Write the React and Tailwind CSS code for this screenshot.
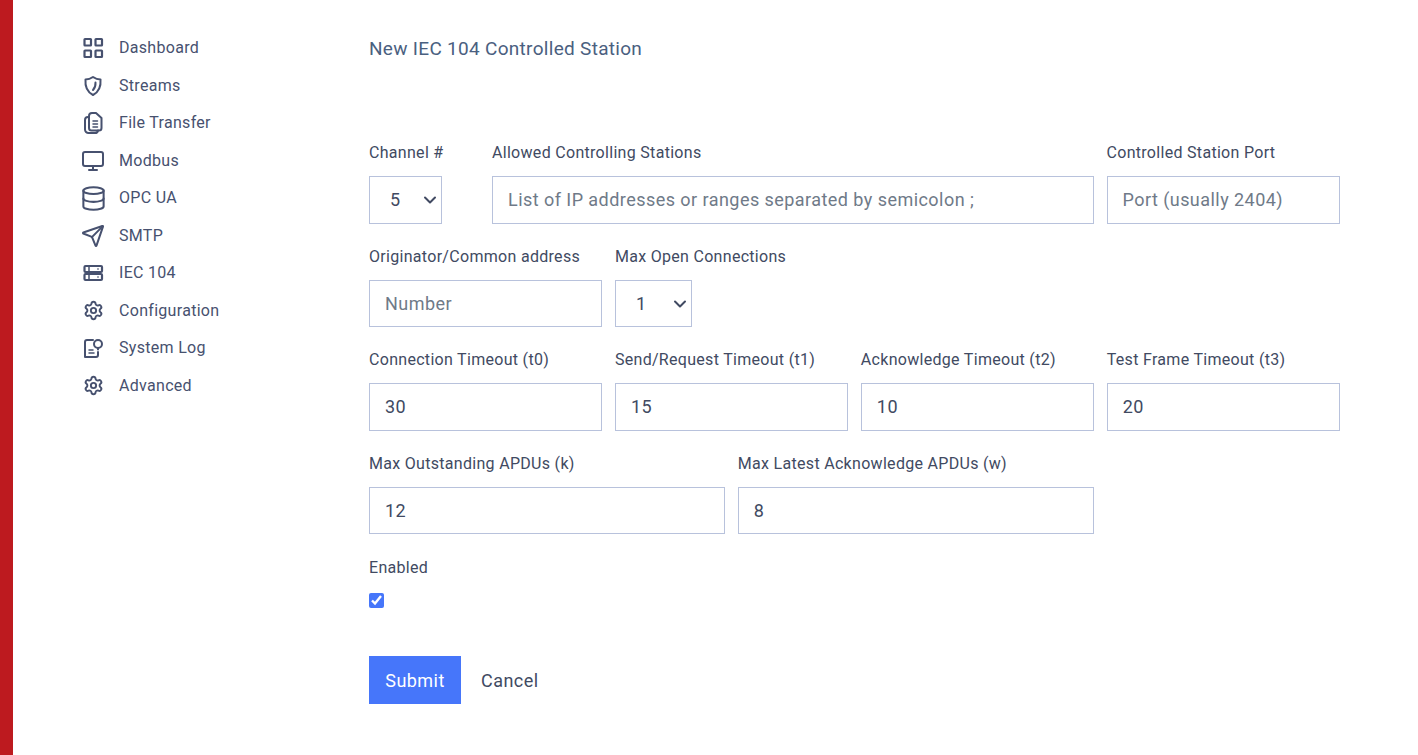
import React from 'react'
import { ChevronDown, Database, Monitor, Send, Settings } from 'lucide-react'

const Grid = () => (
  <svg width="24" height="24" viewBox="0 0 24 24" fill="none" stroke="currentColor" strokeWidth="2.2">
    <rect x="3.5" y="3" width="6.5" height="6.5" rx="0.5" />
    <rect x="14.5" y="3" width="6.5" height="6.5" rx="0.5" />
    <rect x="3.5" y="14.5" width="6.5" height="6.5" rx="0.5" />
    <rect x="14.5" y="14.5" width="6.5" height="6.5" rx="0.5" />
  </svg>
)

const Shield = () => (
  <svg width="24" height="24" viewBox="0 0 24 24" fill="none" stroke="currentColor" strokeWidth="2" strokeLinecap="round" strokeLinejoin="round">
    <path d="M12 3c2.200 1.500 4.800 2.400 7.500 2.400.6 7-1.600 12.600-7.500 15.600-5.900-3-8.100-8.600-7.500-15.600 2.700 0 5.300-.9 7.500-2.400z" />
    <path d="M14.500 8.500c.2 3-.6 5.500-2.500 7.500" />
  </svg>
)

const Files = () => (
  <svg width="24" height="24" viewBox="0 0 24 24" fill="none" stroke="currentColor" strokeWidth="2" strokeLinecap="round" strokeLinejoin="round">
    <path d="M8 17V5a3 3 0 0 1 3-3h4l5.500 5v10a2.500 2.500 0 0 1-2.500 2.500H10.500A2.500 2.500 0 0 1 8 17z" />
    <path d="M8 6H7a3 3 0 0 0-3 3v9.500A3.500 3.500 0 0 0 7.500 22H14a3 3 0 0 0 3-2.500" />
    <path d="M12 10h4.500M12 13h4.500M12 16h4.500" strokeWidth="1.5" />
  </svg>
)

const Server = () => (
  <svg width="24" height="24" viewBox="0 0 24 24" fill="none" stroke="currentColor" strokeWidth="2.2">
    <rect x="3.5" y="5" width="17.5" height="6" rx="1" />
    <rect x="3.5" y="13" width="17.5" height="6" rx="1" />
    <path d="M8 5v6M8 13v6" strokeWidth="1.5" />
    <path d="M16 8h2M16 16h2" strokeWidth="1" />
  </svg>
)

const SystemLog = () => (
  <svg width="24" height="24" viewBox="0 0 24 24" fill="none" stroke="currentColor" strokeWidth="2" strokeLinecap="round" strokeLinejoin="round">
    <path d="M12 4H6a2 2 0 0 0-2 2v15h11a2 2 0 0 0 2-2v-3" />
    <circle cx="17" cy="8" r="4" />
    <path d="M17 12v1.5" />
    <path d="M8 14h4M8 17h5" strokeWidth="1.5" />
  </svg>
)

const navItems = [
  ['Dashboard', <Grid />],
  ['Streams', <Shield />],
  ['File Transfer', <Files />],
  ['Modbus', <Monitor size={24} strokeWidth={2} />],
  ['OPC UA', <Database size={27} strokeWidth={1.8} className="shrink-0" />],
  ['SMTP', <Send size={24} strokeWidth={2} />],
  ['IEC 104', <Server />],
  ['Configuration', <Settings size={21} strokeWidth={2.2} />],
  ['System Log', <SystemLog />],
  ['Advanced', <Settings size={21} strokeWidth={2.2} />],
]

const Label = ({ children }) => (
  <label className="block h-[24px] mb-[12px] text-[16px] leading-[26px] tracking-[0.3px] text-[#414a62] whitespace-nowrap">{children}</label>
)

const inputCls = 'block w-full h-[47.6px] px-[15px] border border-[#b8c2dc] bg-white text-[18px] tracking-[0.45px] text-[#414a62] placeholder:text-[#6f7a88] outline-none'

const Field = ({ label, value, placeholder }) => (
  <div>
    <Label>{label}</Label>
    <input className={inputCls} defaultValue={value} placeholder={placeholder} />
  </div>
)

const Select = ({ value, width }) => (
  <div className={`relative ${width}`}>
    <select className={`${inputCls} appearance-none !pl-[20px]`} defaultValue={value}>
      <option>{value}</option>
    </select>
    <ChevronDown size={20} strokeWidth={2.4} className="absolute right-[2px] top-[14px] text-[#414a62] pointer-events-none" />
  </div>
)

export default function App() {
  return (
    <div className="flex min-h-[755px] bg-white font-['Roboto','Liberation_Sans',sans-serif]">
      <div className="w-[13px] shrink-0 bg-[#bd1a1f]" />

      <nav className="w-[356px] shrink-0 pt-[29.4px] pl-[68px]">
        {navItems.map(([name, icon]) => (
          <div key={name} className="flex items-center h-[37.5px] text-[16px] tracking-[0.3px] text-[#47516f]">
            <span className="flex w-[24px] h-[24px] items-center justify-center mr-[14px]">{icon}</span>
            {name}
          </div>
        ))}
      </nav>

      <main className="w-[971px] pt-[37px]">
        <h1 className="h-[24px] text-[19px] leading-[24px] tracking-[0.3px] text-[#4a6080]">New IEC 104 Controlled Station</h1>

        <div className="flex flex-col gap-[20px] mt-[79px]">
          <div className="flex gap-[12.5px]">
            <div className="w-[110.5px] shrink-0">
              <Label>Channel #</Label>
              <Select value="5" width="w-[73px]" />
            </div>
            <div className="flex-1">
              <Field label="Allowed Controlling Stations" placeholder="List of IP addresses or ranges separated by semicolon ;" />
            </div>
            <div className="w-[233.5px] shrink-0">
              <Field label="Controlled Station Port" placeholder="Port (usually 2404)" />
            </div>
          </div>

          <div className="grid grid-cols-4 gap-x-[12.67px]">
            <Field label="Originator/Common address" placeholder="Number" />
            <div>
              <Label>Max Open Connections</Label>
              <Select value="1" width="w-[77px]" />
            </div>
          </div>

          <div className="grid grid-cols-4 gap-x-[12.67px]">
            <Field label="Connection Timeout (t0)" value="30" />
            <Field label="Send/Request Timeout (t1)" value="15" />
            <Field label="Acknowledge Timeout (t2)" value="10" />
            <Field label="Test Frame Timeout (t3)" value="20" />
          </div>

          <div className="flex gap-[12.67px] w-[725px]">
            <div className="flex-1">
              <Field label="Max Outstanding APDUs (k)" value="12" />
            </div>
            <div className="flex-1">
              <Field label="Max Latest Acknowledge APDUs (w)" value="8" />
            </div>
          </div>

          <div className="mt-[1px]">
            <Label>Enabled</Label>
            <input type="checkbox" defaultChecked className="block w-[15px] h-[15px] mt-[14px] accent-[#4676fa]" />
          </div>
        </div>

        <div className="flex items-center mt-[48px]">
          <button className="h-[48px] w-[92px] bg-[#4676fa] text-white text-[18px] tracking-[0.45px]">Submit</button>
          <button className="ml-[20px] text-[18px] tracking-[0.45px] text-[#414a62]">Cancel</button>
        </div>
      </main>
    </div>
  )
}
